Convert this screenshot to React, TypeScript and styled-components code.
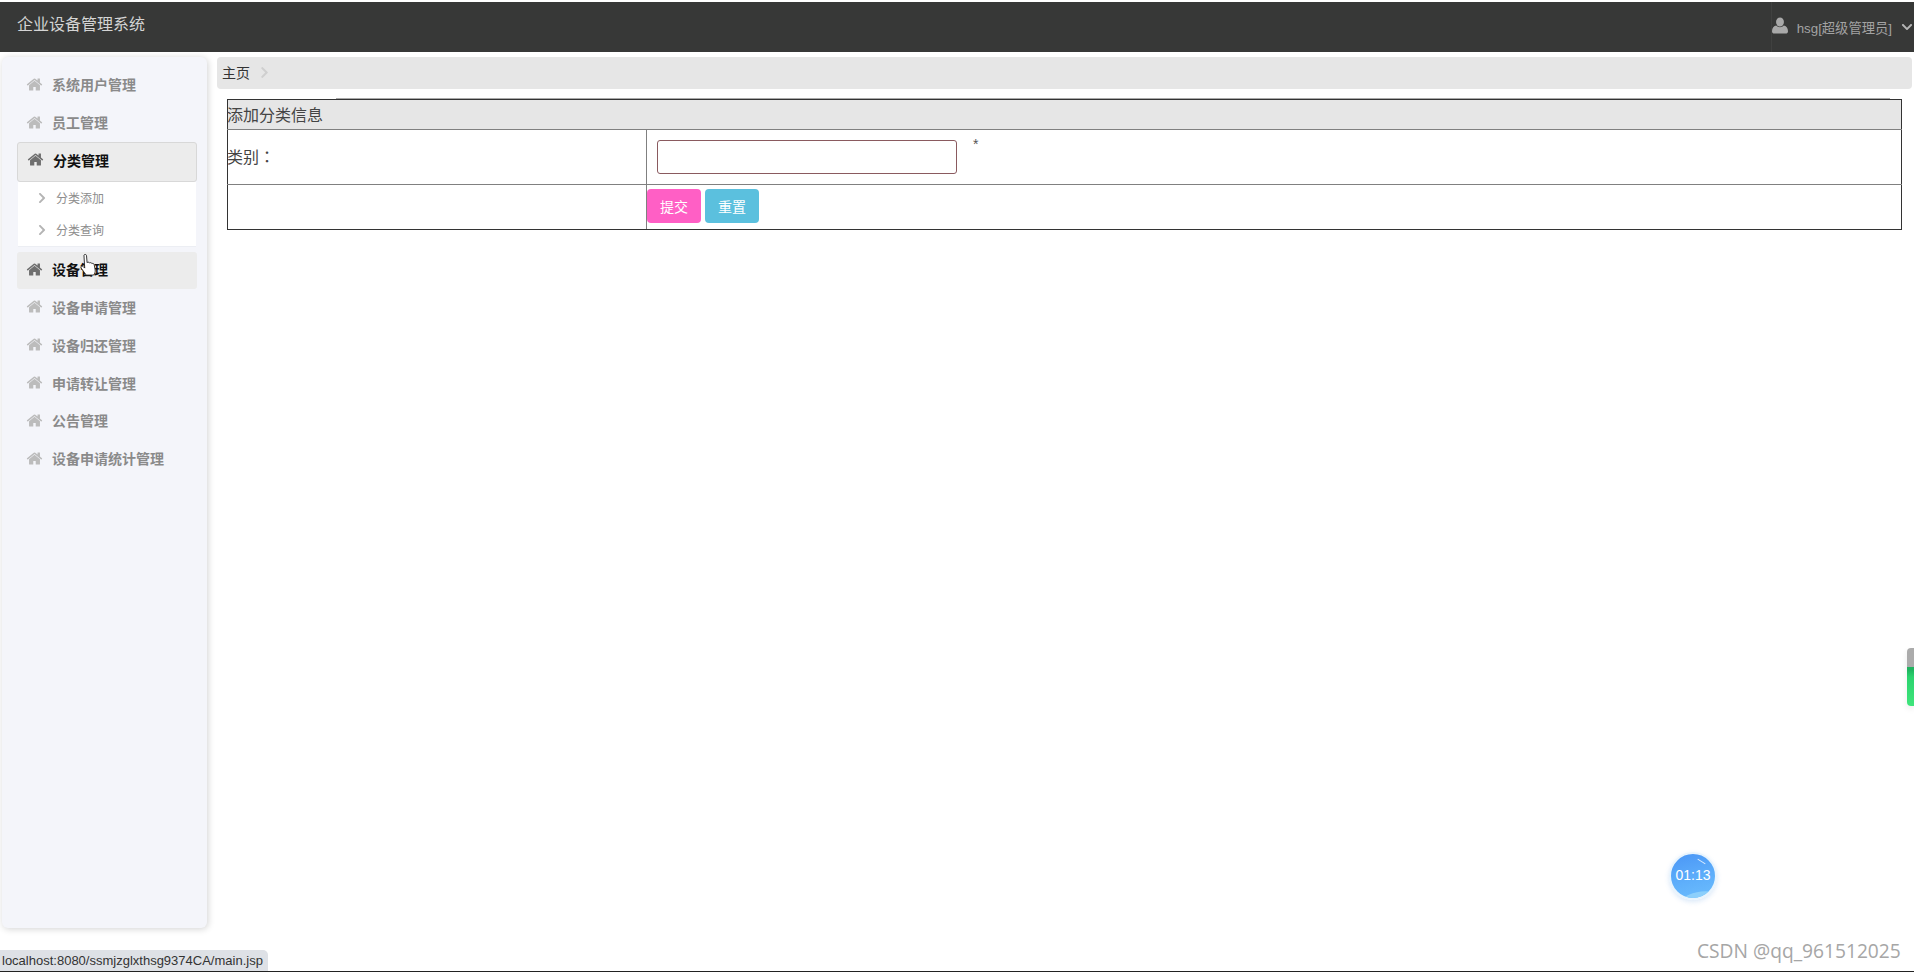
import React from 'react';
import styled, { createGlobalStyle } from 'styled-components';
import { FaChevronDown, FaChevronRight } from 'react-icons/fa';

const Global = createGlobalStyle`
  html, body { margin: 0; padding: 0; background: #fff; overflow: hidden; }
  body { font-family: "Liberation Sans", "Noto Sans CJK SC", sans-serif; }
  #root { height: 972px; }
`;

const Page = styled.div`
  position: relative;
  width: 1914px;
  height: 972px;
  overflow: hidden;
  display: flex;
  flex-direction: column;
  padding-top: 2px;
  box-sizing: border-box;
  background: #fff;
  border-bottom: 1px solid #222;
`;

const Header = styled.header`
  height: 50px;
  flex: none;
  background: #373837;
  display: flex;
  align-items: center;
  justify-content: space-between;
  padding-left: 17px;
  box-sizing: border-box;
`;

const Brand = styled.div`
  font-size: 16px;
  line-height: 20px;
  margin-bottom: 5px;
  color: #d4d4d4;
`;

const UserBox = styled.div`
  height: 50px;
  display: flex;
  align-items: center;
  gap: 9px;
  color: #a3a3a3;
  font-size: 13.3px;
  border-left: 1px solid #404140;
`;

const UserGlyph = styled.svg`
  width: 16px;
  height: 17px;
  margin-top: -3px;
  fill: #a9a9a9;
`;

const Caret = styled(FaChevronDown)`
  font-size: 12px;
  margin-right: 1px;
  color: #b5b5b5;
`;

const Body = styled.div`
  flex: 1;
  display: flex;
  gap: 10px;
  padding: 5px 2px 0 2px;
  min-height: 0;
`;

const Sidebar = styled.aside`
  width: 205px;
  height: 871px;
  flex: none;
  background: #f4f5fa;
  border-radius: 6px;
  box-shadow: 1px 1px 7px rgba(0, 0, 0, 0.18);
  padding: 9px 10px 0 15px;
  box-sizing: border-box;
`;

const MenuItem = styled.div<{ $state?: 'active' | 'hover' }>`
  height: ${(p) => (p.$state === 'active' ? 40 : p.$state === 'hover' ? 37 : 37.8)}px;
  box-sizing: border-box;
  display: flex;
  align-items: center;
  gap: 9px;
  padding: 0 0 ${(p) => (p.$state === 'active' ? 4 : p.$state ? 2 : 1)}px 9px;
  font-size: 14px;
  font-weight: 700;
  color: ${(p) => (p.$state ? '#111' : '#8a8a8a')};
  border-radius: 3px;
  background: ${(p) => (p.$state ? '#ececec' : 'transparent')};
  border: ${(p) => (p.$state === 'active' ? '1px solid #d8d8d8' : 'none')};
  margin-top: ${(p) => (p.$state === 'hover' ? 5 : 0)}px;
  svg { fill: ${(p) => (p.$state ? '#6f6f6f' : '#bcbcbc')}; }
`;

const HomeGlyph = styled.svg`
  width: 17px;
  height: 17px;
  flex: none;
`;

const HomeIcon = () => (
  <HomeGlyph viewBox="0 0 1792 1792">
    <path d="M1472 992v480q0 26-19 45t-45 19h-384v-384h-256v384h-384q-26 0-45-19t-19-45v-480q0-1 .5-3t.5-3l575-474 575 474q1 2 1 6zm223-69l-62 74q-8 9-21 11h-3q-13 0-21-7l-692-577-692 577q-12 8-24 7-13-2-21-11l-62-74q-8-10-7-23.500t11-21.500l719-599q32-26 76-26t76 26l244 204v-195q0-14 9-23t23-9h192q14 0 23 9t9 23v408l219 182q10 8 11 21.500t-7 23.500z" />
  </HomeGlyph>
);

const SubMenu = styled.div`
  margin: 0 1px;
  height: 65px;
  background: #fff;
  border-bottom: 1px solid #eceef3;
  box-sizing: border-box;
`;

const SubItem = styled.div`
  height: 32px;
  display: flex;
  align-items: center;
  gap: 8px;
  padding-left: 18px;
  font-size: 12px;
  color: #8d8d8d;
  svg { font-size: 12px; color: #b4b4b4; }
`;

const Main = styled.main`
  flex: 1;
  min-width: 0;
`;

const Crumb = styled.nav`
  height: 32px;
  background: #e6e6e6;
  border-radius: 4px;
  display: flex;
  align-items: center;
  gap: 8px;
  padding: 0 0 2px 5px;
  box-sizing: border-box;
  font-size: 14px;
  color: #333;
  svg { font-size: 13px; color: #cfcfcf; }
`;

const FormWrap = styled.div`
  position: relative;
  padding: 10px 10px 0 10px;
  &::before {
    content: "";
    position: absolute;
    left: 119px;
    right: 22px;
    top: 9px;
    height: 1px;
    background: #a8a8a8;
  }
`;

const Table = styled.table`
  width: 100%;
  border-collapse: collapse;
  border: 1px solid #333;
  font-size: 16px;
  color: #444;
  table-layout: fixed;
  text-indent: -1px;
`;

const LabelColumn = styled.col`
  width: 419px;
`;

const HeadCell = styled.td`
  height: 30px;
  padding: 0 0 1px;
  box-sizing: border-box;
  background: #e6e6e6;
  border-bottom: 1px solid #808080;
`;

const LabelCell = styled.td<{ $last?: boolean }>`
  padding: 0 0 2px;
  border: 1px solid #808080;
  border-left: none;
  border-bottom-color: ${(p) => (p.$last ? '#333' : '#808080')};
`;

const ValueCell = styled.td<{ $last?: boolean }>`
  padding: 0;
  border: 1px solid #808080;
  border-right: none;
  border-bottom-color: ${(p) => (p.$last ? '#333' : '#808080')};
`;

const Colon = styled.span`
  font-family: "Noto Sans CJK TC", sans-serif;
`;

const FieldRow = styled.div`
  height: 54px;
  display: flex;
  align-items: center;
  padding-left: 10px;
`;

const TextInput = styled.input`
  width: 300px;
  height: 34px;
  box-sizing: border-box;
  border: 1px solid #8a5a5f;
  border-radius: 3px;
  background: #fff;
  outline: none;
  padding: 0 6px;
`;

const Required = styled.span`
  font-size: 14px;
  color: #555;
  margin: -26px 0 0 17px;
`;

const ButtonRow = styled.div`
  height: 44px;
  display: flex;
  align-items: center;
  gap: 4px;
  padding-bottom: 2px;
  box-sizing: border-box;
`;

const ActionButton = styled.button<{ $bg: string }>`
  width: 54px;
  height: 34px;
  padding: 0;
  border: none;
  border-radius: 4px;
  background: ${(p) => p.$bg};
  color: #fff;
  font: 14px "Liberation Sans", "Noto Sans CJK SC", sans-serif;
`;

const StatusBubble = styled.div`
  position: absolute;
  left: 0;
  bottom: 0;
  height: 21px;
  padding: 0 6px 0 2px;
  width: 268px;
  box-sizing: border-box;
  background: #dee1e6;
  border-top-right-radius: 5px;
  font-size: 13px;
  line-height: 21px;
  color: #333;
  white-space: nowrap;
`;

const Timer = styled.div`
  position: absolute;
  left: 1669px;
  top: 852px;
  width: 48px;
  height: 48px;
  border-radius: 50%;
  box-sizing: border-box;
  border: 2px solid #e8f4fd;
  background: linear-gradient(165deg, #4c98f6 5%, #5fb0fb 60%, #6cbdfd 100%);
  box-shadow: 0 2px 5px rgba(70, 140, 220, 0.2);
  color: #fff;
  font-size: 14px;
  display: flex;
  align-items: center;
  justify-content: center;
  padding-bottom: 2px;
  overflow: hidden;
  &::before {
    content: "";
    position: absolute;
    left: 26px;
    top: 7px;
    width: 9px;
    height: 1px;
    background: #d9ecff;
    transform: rotate(32deg);
  }
  &::after {
    content: "";
    position: absolute;
    left: 6px;
    top: 38px;
    width: 44px;
    height: 20px;
    border-radius: 50%;
    background: #8ccffb;
    transform: rotate(-12deg);
  }
`;

const TimerText = styled.span`
  position: relative;
  z-index: 1;
`;

const SideTab = styled.div`
  position: absolute;
  right: 0;
  top: 648px;
  width: 7px;
  height: 58px;
  border-radius: 4px 0 0 4px;
  background: linear-gradient(#ababab 0 19px, #1fb45f 19px 22px, #2bd36e 50%, #3fe57b 100%);
  box-shadow: 0 3px 6px rgba(0, 0, 0, 0.08);
`;

const Watermark = styled.div`
  position: absolute;
  left: 1697px;
  top: 939px;
  font-family: "Open Sans", sans-serif;
  font-size: 19.200px;
  line-height: 24px;
  color: #a6a6a6;
  white-space: nowrap;
`;

const Cursor = styled.svg`
  position: absolute;
  left: 80px;
  top: 253px;
  width: 18px;
  height: 25px;
`;

const menuTop = ['系统用户管理', '员工管理'];
const menuBottom = ['设备申请管理', '设备归还管理', '申请转让管理', '公告管理', '设备申请统计管理'];

export default function App() {
  return (
    <Page>
      <Global />
      <Header>
        <Brand>企业设备管理系统</Brand>
        <UserBox>
          <UserGlyph viewBox="0 0 17 17">
            <ellipse cx="8.500" cy="4.800" rx="4.200" ry="4.800" />
            <path d="M0 14.500C0 11 2 9 4.500 8.500c1 1.200 2.500 1.800 4 1.800s3-.6 4-1.800C15 9 17 11 17 14.500 17 16 16 17 14.500 17h-12C1 17 0 16 0 14.500z" />
          </UserGlyph>
          <span>hsg[超级管理员]</span>
          <Caret />
        </UserBox>
      </Header>
      <Body>
        <Sidebar>
          {menuTop.map((m) => (
            <MenuItem key={m}><HomeIcon />{m}</MenuItem>
          ))}
          <MenuItem $state="active"><HomeIcon />分类管理</MenuItem>
          <SubMenu>
            <SubItem><FaChevronRight />分类添加</SubItem>
            <SubItem><FaChevronRight />分类查询</SubItem>
          </SubMenu>
          <MenuItem $state="hover"><HomeIcon />设备管理</MenuItem>
          {menuBottom.map((m) => (
            <MenuItem key={m}><HomeIcon />{m}</MenuItem>
          ))}
        </Sidebar>
        <Main>
          <Crumb>主页<FaChevronRight /></Crumb>
          <FormWrap>
            <Table>
              <colgroup>
                <LabelColumn />
                <col />
              </colgroup>
              <tbody>
                <tr><HeadCell colSpan={2}>添加分类信息</HeadCell></tr>
                <tr>
                  <LabelCell>类别<Colon>：</Colon></LabelCell>
                  <ValueCell>
                    <FieldRow>
                      <TextInput />
                      <Required>*</Required>
                    </FieldRow>
                  </ValueCell>
                </tr>
                <tr>
                  <LabelCell $last />
                  <ValueCell $last>
                    <ButtonRow>
                      <ActionButton $bg="#ff5fc5">提交</ActionButton>
                      <ActionButton $bg="#5bc0de">重置</ActionButton>
                    </ButtonRow>
                  </ValueCell>
                </tr>
              </tbody>
            </Table>
          </FormWrap>
        </Main>
      </Body>
      <SideTab />
      <Timer><TimerText>01:13</TimerText></Timer>
      <Watermark>CSDN @qq_961512025</Watermark>
      <StatusBubble>localhost:8080/ssmjzglxthsg9374CA/main.jsp</StatusBubble>
      <Cursor viewBox="0 0 16 22">
        <path
          d="M3.500 1.800c.6-1 2.200-.8 2.300.5l.5 6.200c.5-.7 1.900-.6 2.200.3.600-.6 1.900-.4 2.100.5.700-.4 1.800-.1 2 .9l.9 4.800c.2 1.600-.4 3-1.400 4.500H5.500L1 13.300c-.8-1.400.7-2.500 1.800-1.400l1.400 1.400-.7-11.500z"
          fill="#fff"
          stroke="#222"
          strokeWidth="0.8"
        />
      </Cursor>
    </Page>
  );
}
